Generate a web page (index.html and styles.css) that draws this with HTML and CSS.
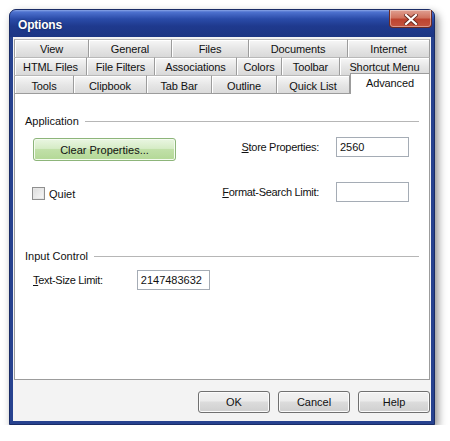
FILE: index.html
```html
<!DOCTYPE html>
<html>
<head>
<meta charset="utf-8">
<link rel="stylesheet" href="styles.css">
</head>
<body>
<div class="page">
  <div class="window">
    <div class="titlebar">
      <span class="title">Options</span>
      <div class="close">
        <svg width="14" height="11" viewBox="0 0 14 11"><path d="M2 1 L12 10 M12 1 L2 10" stroke="#6a2a20" stroke-width="4" stroke-linecap="square"/><path d="M2 1 L12 10 M12 1 L2 10" stroke="#fff" stroke-width="2.2" stroke-linecap="square"/></svg>
      </div>
    </div>
    <div class="client">
      <div class="tabs">
        <div class="tabrow r1">
          <div class="tab">View</div><div class="tab">General</div><div class="tab">Files</div><div class="tab">Documents</div><div class="tab">Internet</div>
        </div>
        <div class="tabrow r2">
          <div class="tab">HTML Files</div><div class="tab">File Filters</div><div class="tab">Associations</div><div class="tab">Colors</div><div class="tab">Toolbar</div><div class="tab">Shortcut Menu</div>
        </div>
        <div class="tabrow r3">
          <div class="tab">Tools</div><div class="tab">Clipbook</div><div class="tab">Tab Bar</div><div class="tab">Outline</div><div class="tab">Quick List</div><div class="tab active">Advanced</div>
        </div>
      </div>
      <div class="panel">
        <div class="group">
          <div class="legend"><span>Application</span><div class="rule"></div></div>
          <div class="app-grid">
            <div class="left">
              <button class="btn green">Clear Properties...</button>
              <label class="check"><span class="box"></span>Quiet</label>
            </div>
            <div class="right">
              <div class="field"><span class="lbl"><u>S</u>tore Properties:</span><div class="input">2560</div></div>
              <div class="field"><span class="lbl"><u>F</u>ormat-Search Limit:</span><div class="input"></div></div>
            </div>
          </div>
        </div>
        <div class="group g2">
          <div class="legend"><span>Input Control</span><div class="rule"></div></div>
          <div class="field f3"><span class="lbl"><u>T</u>ext-Size Limit:</span><div class="input">2147483632</div></div>
        </div>
      </div>
      <div class="buttons">
        <button class="btn">OK</button>
        <button class="btn">Cancel</button>
        <button class="btn">Help</button>
      </div>
    </div>
  </div>
</div>
</body>
</html>
```
FILE: styles.css
```css
* { box-sizing: border-box; }
body {
  margin: 0;
  background: #fff;
  font-family: "Liberation Sans", Arial, sans-serif;
  font-size: 11px;
  color: #111;
}
.page { padding: 9px 0 0 9px; }
.window {
  width: 426px;
  height: 416px;
  display: flex;
  flex-direction: column;
  background: #27428f;
  border-radius: 7px 7px 0 0;
  border: 1px solid #1a2c66;
  box-shadow: 3px 4px 9px rgba(0,0,0,0.45);
}
.titlebar {
  height: 27px;
  display: flex;
  align-items: center;
  justify-content: space-between;
  padding: 0 2px 0 8px;
  border-radius: 6px 6px 0 0;
  background: linear-gradient(#8aa6e6 0, #4e72cf 2px, #2a4ba8 9px, #1f3a8e 16px, #1c3583 100%);
}
.title {
  color: #fff;
  font-weight: bold;
  font-size: 12px;
  letter-spacing: -0.2px;
  margin-top: 3px;
  text-shadow: 0 0 2px rgba(0,0,0,0.5);
}
.close {
  width: 43px;
  height: 18px;
  margin-top: -9px;
  border: 1px solid #6b2a24;
  border-top: none;
  border-radius: 0 0 4px 4px;
  background: linear-gradient(#e0a092 0, #d0735f 45%, #bd4430 55%, #c45440 100%);
  box-shadow: inset 0 0 0 1px rgba(255,255,255,0.4);
  display: flex;
  align-items: center;
  justify-content: center;
  padding-top: 1px;
}
.client {
  flex: 1;
  margin: 0 3px 3px 3px;
  background: #f3f3f3;
  padding: 2px 1px 0 1px;
  display: flex;
  flex-direction: column;
}
.tabs { display: flex; flex-direction: column; }
.tabrow { display: grid; height: 18px; }
.r1 { grid-template-columns: 75px 83px 77px 99px 82px; }
.r2 { grid-template-columns: 73px 68px 82px 45px 58px 90px; }
.r3 { grid-template-columns: 60px 73px 65px 65px 73px 80px; }
.tab {
  display: flex;
  align-items: center;
  justify-content: center;
  background: linear-gradient(#f7f7f7, #e6e6e6 50%, #d9d9d9);
  border-top: 1px solid #b8b8b8;
  border-right: 1px solid #9c9c9c;
  box-shadow: inset 1px 1px 0 #fff;
  font-size: 11px;
  letter-spacing: -0.1px;
  padding-top: 1px;
}
.tab:first-child { border-left: 1px solid #9c9c9c; }
.tab.active {
  background: #fff;
  box-shadow: none;
  border: 1px solid #9c9c9c;
  border-bottom: none;
  margin-top: -2px;
  height: 21px;
  padding-bottom: 4px;
  position: relative;
  z-index: 1;
}
.panel {
  height: 287px;
  background: #fff;
  border: 1px solid #9c9c9c;
  padding: 20px 10px 0 10px;
}
.group { display: flex; flex-direction: column; }
.legend {
  display: flex;
  align-items: center;
  gap: 6px;
  height: 14px;
}
.legend .rule { flex: 1; height: 1px; background: #b6b6b6; }
.app-grid {
  display: flex;
  justify-content: space-between;
  margin-top: 10px;
}
.left { display: flex; flex-direction: column; padding-left: 8px; }
.btn {
  font-family: "Liberation Sans", Arial, sans-serif;
  font-size: 11px;
  color: #111;
  width: 72px;
  height: 22px;
  border: 1px solid #707070;
  border-radius: 3px;
  background: linear-gradient(#f2f2f2 0, #ebebeb 45%, #dcdcdc 50%, #cfcfcf 100%);
  box-shadow: inset 0 0 0 1px #fbfbfb;
  padding: 0;
}
.btn.green {
  width: 143px;
  height: 23px;
  border-color: #8db57a;
  background: linear-gradient(#eaf6e2 0, #d6ecc6 45%, #c1e0a8 50%, #b3d896 100%);
  box-shadow: inset 0 0 0 1px #f4fbef;
}
.check {
  display: flex;
  align-items: center;
  margin-top: 26px;
  margin-left: -1px;
  gap: 4px;
}
.box {
  width: 13px;
  height: 13px;
  border: 1px solid #8f8f8f;
  background: linear-gradient(135deg, #dcdcdc, #f8f8f8);
  box-shadow: inset 0 0 0 1px #e6e6e6;
}
.right {
  display: flex;
  flex-direction: column;
  gap: 25px;
  padding-right: 10px;
  margin-top: -1px;
}
.field {
  display: flex;
  align-items: center;
  justify-content: flex-end;
  gap: 17px;
}
.lbl { letter-spacing: -0.3px; }
.input {
  width: 73px;
  height: 20px;
  border: 1px solid #a5acb5;
  background: #fff;
  padding: 2px 3px;
  font-size: 11px;
  display: flex;
  align-items: center;
}
.g2 { margin-top: 47px; }
.f3 {
  justify-content: flex-start;
  margin-top: 7px;
  padding-left: 8px;
  gap: 34px;
}
.buttons {
  display: flex;
  justify-content: flex-end;
  gap: 8px;
  padding: 11px 0 0 0;
}
```
